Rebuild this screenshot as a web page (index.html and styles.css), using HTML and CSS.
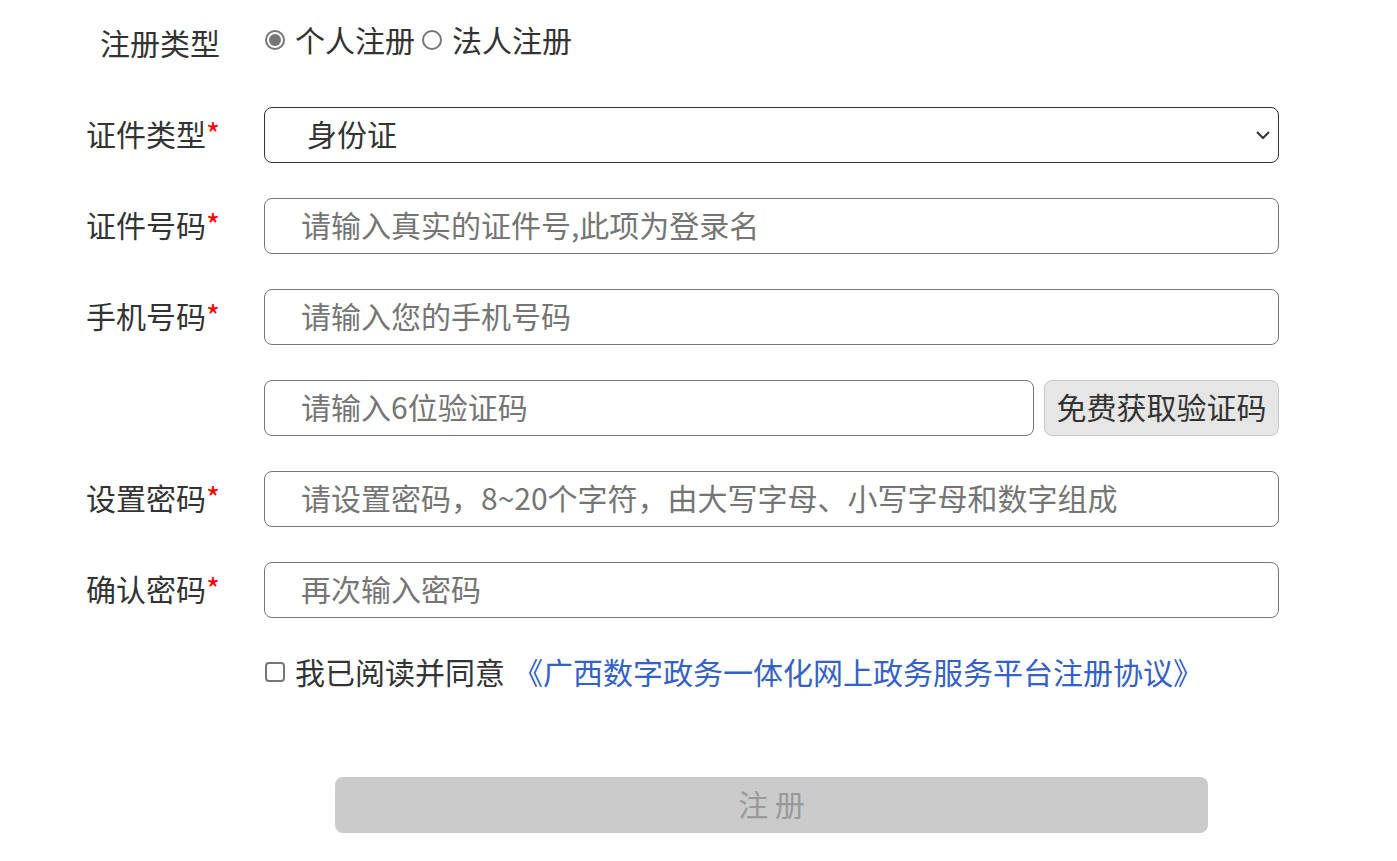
FILE: index.html
```html
<!DOCTYPE html>
<html lang="zh-CN">
<head>
<meta charset="utf-8">
<title>注册</title>
<link rel="stylesheet" href="styles.css">
</head>
<body>
<form class="reg-form">
  <div class="row row-type">
    <div class="label">注册类型</div>
    <div class="field radios">
      <label class="opt"><span class="radio checked"></span>个人注册</label>
      <label class="opt"><span class="radio"></span>法人注册</label>
    </div>
  </div>
  <div class="row">
    <div class="label">证件类型<span class="req">*</span></div>
    <div class="field select-wrap">
      <select class="ctl select">
        <option>身份证</option>
      </select>
      <svg class="chev" width="16" height="10" viewBox="0 0 16 10"><path d="M2 2 L8 8 L14 2" fill="none" stroke="#333" stroke-width="2"/></svg>
    </div>
  </div>
  <div class="row">
    <div class="label">证件号码<span class="req">*</span></div>
    <div class="field"><input class="ctl" placeholder="请输入真实的证件号,此项为登录名"></div>
  </div>
  <div class="row">
    <div class="label">手机号码<span class="req">*</span></div>
    <div class="field"><input class="ctl" placeholder="请输入您的手机号码"></div>
  </div>
  <div class="row">
    <div class="label"></div>
    <div class="field code">
      <input class="ctl" placeholder="请输入6位验证码">
      <button type="button" class="code-btn">免费获取验证码</button>
    </div>
  </div>
  <div class="row">
    <div class="label">设置密码<span class="req">*</span></div>
    <div class="field"><input class="ctl" placeholder="请设置密码，8~20个字符，由大写字母、小写字母和数字组成"></div>
  </div>
  <div class="row">
    <div class="label">确认密码<span class="req">*</span></div>
    <div class="field"><input class="ctl" placeholder="再次输入密码"></div>
  </div>
  <div class="row row-agree">
    <div class="label"></div>
    <div class="field agree">
      <span class="checkbox"></span>
      <span class="agree-text">我已阅读并同意</span>
      <a class="agree-link" href="#">《广西数字政务一体化网上政务服务平台注册协议》</a>
    </div>
  </div>
  <div class="row row-submit">
    <div class="label"></div>
    <div class="field submit-wrap">
      <button type="button" class="submit">注 册</button>
    </div>
  </div>
</form>
</body>
</html>
```
FILE: styles.css
```css
* { box-sizing: border-box; }
body {
  margin: 0;
  background: #fff;
  font-family: "Noto Sans CJK SC", "Noto Sans", sans-serif;
  color: #333;
  font-size: 30px;
}
.reg-form {
  padding: 16px 0 0 80px;
  width: 1280px;
}
.row {
  display: grid;
  grid-template-columns: 140px 1015px;
  column-gap: 44px;
  align-items: center;
  height: 56px;
  margin-bottom: 35px;
}
.label {
  text-align: right;
  line-height: 1;
  white-space: nowrap;
  color: #333;
  padding-bottom: 4px;
}
.req { color: #f00; }
.field { position: relative; }
.radios {
  display: flex;
  align-items: center;
  gap: 6px;
  margin-top: -10px;
  line-height: 1;
}
.opt {
  display: flex;
  align-items: center;
  gap: 10px;
  color: #333;
}
.radio {
  width: 20px;
  height: 20px;
  border: 2px solid #767676;
  border-radius: 50%;
  display: inline-block;
  position: relative;
  margin-left: 1px;
  margin-top: 2px;
}
.radio.checked::after {
  content: "";
  position: absolute;
  left: 2px;
  top: 2px;
  width: 12px;
  height: 12px;
  border-radius: 50%;
  background: #767676;
}
.ctl {
  width: 100%;
  height: 56px;
  border: 1px solid #767676;
  border-radius: 8px;
  padding: 0 0 4px 36px;
  font: inherit;
  font-size: 30px;
  color: #333;
  background: #fff;
  outline: none;
}
.ctl::placeholder { color: #757575; }
.select {
  appearance: none;
  -webkit-appearance: none;
  padding-left: 42px;
  border-color: #333;
}
.chev {
  position: absolute;
  right: 8px;
  top: 23px;
  pointer-events: none;
}
.code {
  display: flex;
  gap: 10px;
}
.code .ctl { flex: 1; }
.code-btn {
  width: 235px;
  height: 56px;
  background: #e6e6e6;
  border: 1px solid #c8c8c8;
  border-radius: 8px;
  font: inherit;
  font-size: 30px;
  color: #333;
  padding: 0 0 4px;
}
.row-agree {
  height: 40px;
  margin-bottom: 84px;
}
.agree {
  display: flex;
  align-items: center;
  line-height: 1;
  padding-bottom: 4px;
}
.checkbox {
  width: 20px;
  height: 20px;
  border: 2px solid #767676;
  border-radius: 4px;
  margin: 2px 10px 0 1px;
  flex: none;
}
.agree-text { color: #333; margin-right: 8px; }
.agree-link {
  color: #3461c8;
  text-decoration: none;
}
.submit-wrap {
  display: flex;
  justify-content: center;
}
.submit {
  width: 873px;
  height: 56px;
  background: #cbcbcb;
  border: none;
  border-radius: 8px;
  font: inherit;
  font-size: 30px;
  color: #999;
  padding: 0 0 4px;
}
```
